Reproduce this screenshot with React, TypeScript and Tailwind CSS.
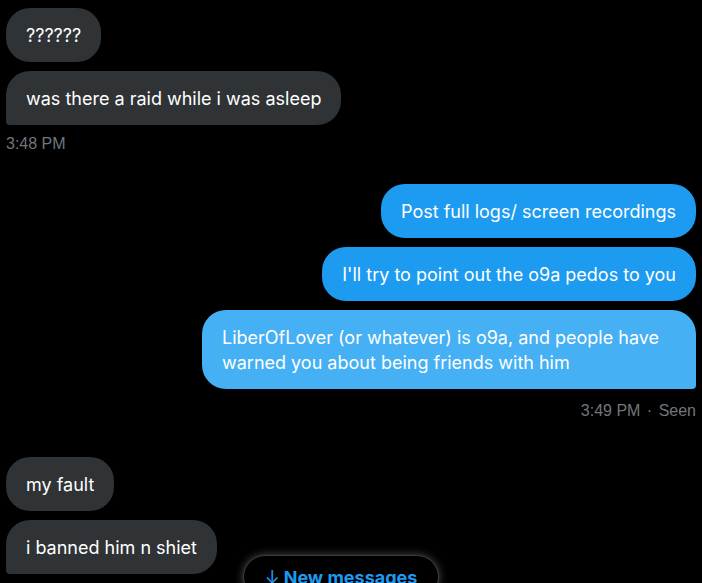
const bubbleFont = { fontFamily: 'Inter, "Noto Sans", sans-serif' };

type Side = 'in' | 'out';

const Bubble = ({
  text,
  side,
  tail = false,
  light = false,
}: {
  text: string;
  side: Side;
  tail?: boolean;
  light?: boolean;
}) => {
  const base =
    'max-w-[494px] rounded-[24px] px-5 py-[14.5px] text-[18px] leading-[25px] text-white';
  const color =
    side === 'in' ? 'bg-[#2f3336]' : light ? 'bg-[#45b0f3]' : 'bg-[#1d9bf0]';
  const corner =
    tail && side === 'in' ? 'rounded-bl-[4px]' : tail ? 'rounded-br-[4px]' : '';
  return (
    <div className={side === 'in' ? 'flex justify-start' : 'flex justify-end'}>
      <div className={`${base} ${color} ${corner}`} style={bubbleFont}>
        {text}
      </div>
    </div>
  );
};

const Stamp = ({ children, right = false }: { children: React.ReactNode; right?: boolean }) => (
  <div
    className={`text-[16px] leading-[16px] text-[#71767b] ${right ? 'text-right' : ''}`}
    style={{ fontFamily: '"Liberation Sans", Arial, sans-serif' }}
  >
    {children}
  </div>
);

export default function App() {
  return (
    <div className="relative w-[702px] h-[583px] overflow-hidden bg-black">
      <div className="flex flex-col px-[6px] pt-[8px]">
        <div className="flex flex-col gap-[9px]">
          <Bubble side="in" text="??????" />
          <Bubble side="in" tail text="was there a raid while i was asleep" />
        </div>
        <div className="mt-[11px]">
          <Stamp>3:48 PM</Stamp>
        </div>

        <div className="mt-[32px] flex flex-col gap-[9px]">
          <Bubble side="out" text="Post full logs/ screen recordings" />
          <Bubble side="out" text="I'll try to point out the o9a pedos to you" />
          <Bubble
            side="out"
            tail
            light
            text="LiberOfLover (or whatever) is o9a, and people have warned you about being friends with him"
          />
        </div>
        <div className="mt-[14px]">
          <Stamp right>
            3:49 PM <span className="mx-[2px]">·</span> Seen
          </Stamp>
        </div>

        <div className="mt-[38px] flex flex-col gap-[9px]">
          <Bubble side="in" text="my fault" />
          <Bubble side="in" tail text="i banned him n shiet" />
        </div>
      </div>

      <button
        className="absolute left-[243px] top-[555px] flex h-[44px] w-[196px] items-center justify-center gap-1 rounded-full border border-[#3a3e42] bg-black text-[18px] font-bold text-[#1d9bf0] shadow-[0_0_8px_rgba(255,255,255,0.3)]"
        style={bubbleFont}
      >
        <span className="font-normal">↓</span>
        <span>New messages</span>
      </button>
    </div>
  );
}
